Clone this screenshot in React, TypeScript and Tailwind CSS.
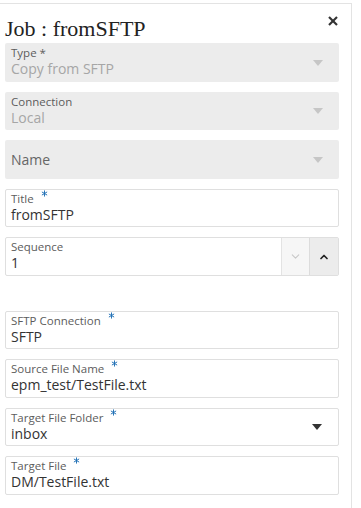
import { ChevronDown, ChevronUp } from 'lucide-react'

const font = { fontFamily: '"Open Sans", "Noto Sans", sans-serif' }

function Star() {
  return (
    <svg viewBox="0 0 8 8" className="w-[7px] h-[7px] ml-[7px] -mt-[1px] shrink-0" stroke="#1f6fb5" strokeWidth={1.1}>
      <line x1="4" y1="0.5" x2="4" y2="7.5" />
      <line x1="1" y1="2.2" x2="7" y2="5.8" />
      <line x1="1" y1="5.8" x2="7" y2="2.2" />
    </svg>
  )
}

function Caret({ dark }: { dark?: boolean }) {
  return (
    <svg viewBox="0 0 10 6" className="w-[10px] h-[6px] mr-[16px] shrink-0">
      <polygon points="0,0 10,0 5,6" fill={dark ? '#333333' : '#c6c6c6'} />
    </svg>
  )
}

function Label({ text, required }: { text: string; required?: boolean }) {
  return (
    <div className="flex items-start text-[11.5px] leading-[15px] text-[#5c5c5c]">
      <span>{text}</span>
      {required && <Star />}
    </div>
  )
}

export default function App() {
  return (
    <div className="w-[361px] h-[508px] bg-white overflow-hidden" style={font}>
      <div className="mt-[3px] w-[352px] h-[505px] border-t border-r border-[#e3e3e3] pl-[5px] pr-[12px]">
        {/* Header */}
        <div className="h-[39px] flex items-start justify-between">
          <h1
            className="text-[22px] leading-[24px] pt-[13px] text-[#222]"
            style={{ fontFamily: '"Liberation Serif", serif' }}
          >
            Job : fromSFTP
          </h1>
          <svg viewBox="0 0 10 10" className="w-[10px] h-[10px] mt-[12px] mr-[1px]" stroke="#333" strokeWidth={2.2}>
            <line x1="1" y1="1" x2="9" y2="9" />
            <line x1="9" y1="1" x2="1" y2="9" />
          </svg>
        </div>

        <div className="flex flex-col">
          {/* Type */}
          <div className="h-[39px] rounded-[2px] bg-[#ececec] flex items-start">
            <div className="flex-1 pl-[6px] pt-[2px]">
              <div className="text-[11.5px] leading-[15px] text-[#5c5c5c]">Type *</div>
              <div className="text-[14px] leading-[18px] text-[#a6a6a6]">Copy from SFTP</div>
            </div>
            <div className="self-center">
              <Caret />
            </div>
          </div>

          {/* Connection */}
          <div className="mt-[10px] h-[38px] rounded-[2px] bg-[#ececec] flex items-start">
            <div className="flex-1 pl-[6px] pt-[2px]">
              <div className="text-[11.5px] leading-[15px] text-[#5c5c5c]">Connection</div>
              <div className="text-[14px] leading-[18px] text-[#a6a6a6]">Local</div>
            </div>
            <div className="self-center">
              <Caret />
            </div>
          </div>

          {/* Name */}
          <div className="mt-[10px] h-[39px] rounded-[2px] bg-[#ececec] flex items-center">
            <div className="flex-1 pl-[6px] text-[14px] leading-[18px] text-[#666]">Name</div>
            <Caret />
          </div>

          {/* Title */}
          <div className="mt-[10px] h-[38px] rounded-[2px] border border-[#dfdfdf] pl-[5px] pt-[0.5px]">
            <Label text="Title" required />
            <div className="text-[14px] leading-[18px] text-[#333]">fromSFTP</div>
          </div>

          {/* Sequence */}
          <div className="mt-[10px] h-[39px] rounded-[2px] border border-[#dfdfdf] flex">
            <div className="flex-1 pl-[5px] pt-[0.5px]">
              <Label text="Sequence" />
              <div className="text-[14px] leading-[18px] text-[#333]">1</div>
            </div>
            <div className="w-[28px] border-l border-[#e3e3e3] bg-[#f6f6f6] flex items-center justify-center">
              <ChevronDown className="w-[13px] h-[13px] text-[#c8c8c8]" strokeWidth={2} />
            </div>
            <div className="w-[29px] border-l border-[#dcdcdc] bg-[#ececec] flex items-center justify-center">
              <ChevronUp className="w-[12px] h-[12px] text-[#222]" strokeWidth={3.5} />
            </div>
          </div>

          {/* SFTP Connection */}
          <div className="mt-[35px] h-[38px] rounded-[2px] border border-[#dfdfdf] pl-[5px] pt-[0.5px]">
            <Label text="SFTP Connection" required />
            <div className="text-[14px] leading-[18px] text-[#333]">SFTP</div>
          </div>

          {/* Source File Name */}
          <div className="mt-[10px] h-[39px] rounded-[2px] border border-[#dfdfdf] pl-[5px] pt-[0.5px]">
            <Label text="Source File Name" required />
            <div className="text-[14px] leading-[18px] text-[#333]">epm_test/TestFile.txt</div>
          </div>

          {/* Target File Folder */}
          <div className="mt-[10px] h-[38px] rounded-[2px] border border-[#dfdfdf] flex items-center">
            <div className="flex-1 self-start pl-[5px] pt-[0.5px]">
              <Label text="Target File Folder" required />
              <div className="text-[14px] leading-[18px] text-[#333]">inbox</div>
            </div>
            <Caret dark />
          </div>

          {/* Target File */}
          <div className="mt-[10px] h-[39px] rounded-[2px] border border-[#dfdfdf] pl-[5px] pt-[0.5px]">
            <Label text="Target File" required />
            <div className="text-[14px] leading-[18px] text-[#333]">DM/TestFile.txt</div>
          </div>
        </div>
      </div>
    </div>
  )
}
